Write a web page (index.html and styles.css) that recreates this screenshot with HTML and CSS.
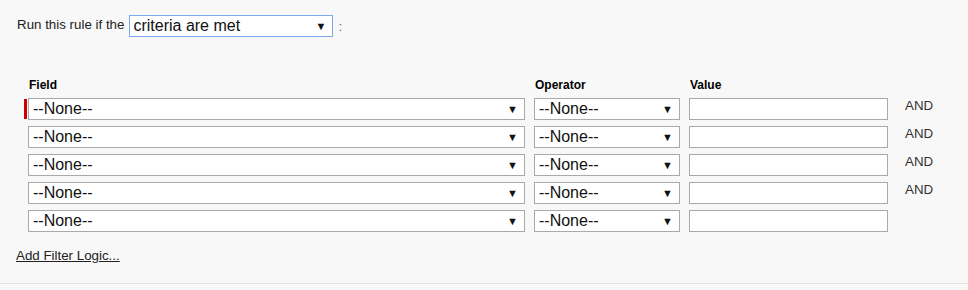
FILE: index.html
```html
<!DOCTYPE html>
<html>
<head>
<meta charset="utf-8">
<link rel="stylesheet" href="styles.css">
</head>
<body>
<div class="page">
  <div class="run-row">
    <span class="run-label">Run this rule if the</span>
    <div class="sel sel-main"><span class="sel-text">criteria are met</span><span class="arrow">▼</span></div>
    <span class="colon">:</span>
  </div>

  <div class="criteria">
    <div class="hdr hdr-field">Field</div>
    <div class="hdr">Operator</div>
    <div class="hdr">Value</div>
    <div class="hdr"></div>

    <div class="sel required"><span class="sel-text">--None--</span><span class="arrow">▼</span></div>
    <div class="sel"><span class="sel-text">--None--</span><span class="arrow">▼</span></div>
    <div class="inp"></div>
    <div class="conj">AND</div>

    <div class="sel"><span class="sel-text">--None--</span><span class="arrow">▼</span></div>
    <div class="sel"><span class="sel-text">--None--</span><span class="arrow">▼</span></div>
    <div class="inp"></div>
    <div class="conj">AND</div>

    <div class="sel"><span class="sel-text">--None--</span><span class="arrow">▼</span></div>
    <div class="sel"><span class="sel-text">--None--</span><span class="arrow">▼</span></div>
    <div class="inp"></div>
    <div class="conj">AND</div>

    <div class="sel"><span class="sel-text">--None--</span><span class="arrow">▼</span></div>
    <div class="sel"><span class="sel-text">--None--</span><span class="arrow">▼</span></div>
    <div class="inp"></div>
    <div class="conj">AND</div>

    <div class="sel"><span class="sel-text">--None--</span><span class="arrow">▼</span></div>
    <div class="sel"><span class="sel-text">--None--</span><span class="arrow">▼</span></div>
    <div class="inp"></div>
    <div class="conj"></div>
  </div>

  <a class="logic-link" href="#">Add Filter Logic...</a>
</div>
<div class="footer"></div>
</body>
</html>
```

FILE: styles.css
```css
html, body {
  margin: 0;
  padding: 0;
  background: #f8f8f8;
  font-family: "Liberation Sans", Arial, sans-serif;
  color: #000;
}

.page {
  height: 284px;
  box-sizing: border-box;
  padding: 15px 0 0 17px;
  border-bottom: 1px solid #e3e3e3;
}

.run-row {
  display: flex;
  align-items: center;
  height: 22px;
}

.run-label {
  font-size: 13.33px;
  color: #222;
  margin-right: 5px;
  position: relative;
  top: -2px;
}

.colon {
  font-size: 13.33px;
  color: #666;
  margin-left: 5px;
}

.sel {
  position: relative;
  box-sizing: border-box;
  height: 22px;
  background: #fff;
  border: 1px solid #a9a9a9;
  display: flex;
  align-items: center;
  padding-left: 4px;
  font-size: 16px;
  color: #111;
}

.sel-main {
  width: 204px;
  border-color: #7ea9ea;
  padding-left: 3px;
}

.sel-text {
  flex: 1;
  line-height: 20px;
  white-space: nowrap;
}

.arrow {
  font-size: 11px;
  color: #111;
  margin-right: 6px;
  line-height: 20px;
}

.criteria {
  margin-top: 40px;
  margin-left: 11px;
  display: grid;
  grid-template-columns: 497px 146px 199px auto;
  column-gap: 9px;
  row-gap: 6px;
}

.criteria .inp {
  box-sizing: border-box;
  height: 22px;
  background: #fff;
  border: 1px solid #a9a9a9;
}

.criteria .conj {
  font-size: 13.33px;
  color: #333;
  padding-left: 8px;
  line-height: 14px;
  padding-top: 1px;
}

.hdr {
  font-size: 12px;
  font-weight: bold;
  color: #000;
  padding-left: 1px;
  margin-bottom: -1px;
  line-height: 15px;
  padding-top: 1px;
}

.required::before {
  content: "";
  position: absolute;
  left: -5px;
  top: 0;
  width: 3px;
  height: 20px;
  background: #c00;
}

.logic-link {
  display: inline-block;
  margin-top: 16px;
  margin-left: -1px;
  font-size: 13.33px;
  color: #222;
  text-decoration: underline;
}

.footer {
  height: 6px;
  background: #f8f8f8;
}
```
